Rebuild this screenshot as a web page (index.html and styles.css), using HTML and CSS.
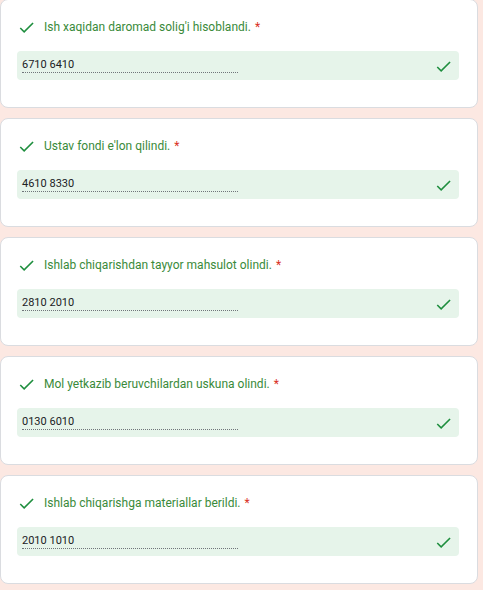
FILE: index.html
```html
<!DOCTYPE html>
<html lang="uz">
<head>
<meta charset="utf-8">
<title>Form</title>
<link rel="stylesheet" href="styles.css">
</head>
<body>
<div class="page">
  <div class="card">
    <div class="title-row">
      <svg class="check" viewBox="0 0 24 24"><path d="M9 16.17L4.83 12l-1.42 1.41L9 19 21 7l-1.41-1.41z"/></svg>
      <span class="title">Ish xaqidan daromad solig'i hisoblandi.</span><span class="req">*</span>
    </div>
    <div class="answer">
      <span class="value">6710 6410</span>
      <svg class="check check-right" viewBox="0 0 24 24"><path d="M9 16.17L4.83 12l-1.42 1.41L9 19 21 7l-1.41-1.41z"/></svg>
    </div>
  </div>
  <div class="card">
    <div class="title-row">
      <svg class="check" viewBox="0 0 24 24"><path d="M9 16.17L4.83 12l-1.42 1.41L9 19 21 7l-1.41-1.41z"/></svg>
      <span class="title">Ustav fondi e'lon qilindi.</span><span class="req">*</span>
    </div>
    <div class="answer">
      <span class="value">4610 8330</span>
      <svg class="check check-right" viewBox="0 0 24 24"><path d="M9 16.17L4.83 12l-1.42 1.41L9 19 21 7l-1.41-1.41z"/></svg>
    </div>
  </div>
  <div class="card">
    <div class="title-row">
      <svg class="check" viewBox="0 0 24 24"><path d="M9 16.17L4.83 12l-1.42 1.41L9 19 21 7l-1.41-1.41z"/></svg>
      <span class="title">Ishlab chiqarishdan tayyor mahsulot olindi.</span><span class="req">*</span>
    </div>
    <div class="answer">
      <span class="value">2810 2010</span>
      <svg class="check check-right" viewBox="0 0 24 24"><path d="M9 16.17L4.83 12l-1.42 1.41L9 19 21 7l-1.41-1.41z"/></svg>
    </div>
  </div>
  <div class="card">
    <div class="title-row">
      <svg class="check" viewBox="0 0 24 24"><path d="M9 16.17L4.83 12l-1.42 1.41L9 19 21 7l-1.41-1.41z"/></svg>
      <span class="title">Mol yetkazib beruvchilardan uskuna olindi.</span><span class="req">*</span>
    </div>
    <div class="answer">
      <span class="value">0130 6010</span>
      <svg class="check check-right" viewBox="0 0 24 24"><path d="M9 16.17L4.83 12l-1.42 1.41L9 19 21 7l-1.41-1.41z"/></svg>
    </div>
  </div>
  <div class="card">
    <div class="title-row">
      <svg class="check" viewBox="0 0 24 24"><path d="M9 16.17L4.83 12l-1.42 1.41L9 19 21 7l-1.41-1.41z"/></svg>
      <span class="title">Ishlab chiqarishga materiallar berildi.</span><span class="req">*</span>
    </div>
    <div class="answer">
      <span class="value">2010 1010</span>
      <svg class="check check-right" viewBox="0 0 24 24"><path d="M9 16.17L4.83 12l-1.42 1.41L9 19 21 7l-1.41-1.41z"/></svg>
    </div>
  </div>
</div>
</body>
</html>
```

FILE: styles.css
```css
html, body {
  margin: 0;
  padding: 0;
  background: #fce8e2;
  font-family: Roboto, "Liberation Sans", Arial, sans-serif;
}

.page {
  display: flex;
  flex-direction: column;
  gap: 10px;
  width: 478px;
  margin-top: -1px;
}

.card {
  box-sizing: border-box;
  height: 109px;
  background: #fff;
  border: 1px solid #dadce0;
  border-radius: 8px;
  padding: 17px 18px 0 16px;
}

.title-row {
  display: flex;
  align-items: center;
  height: 20px;
}

.check {
  width: 19px;
  height: 19px;
  fill: #1e8e3e;
  flex: none;
}

.title-row .check {
  margin-right: 8px;
}

.title {
  font-size: 12px;
  color: #3a8a3a;
}

.req {
  font-size: 12px;
  color: #d93025;
  margin-left: 4px;
}

.answer {
  box-sizing: border-box;
  margin-top: 14px;
  height: 29px;
  background: #e6f4ea;
  border-radius: 4px;
  display: flex;
  align-items: center;
  justify-content: space-between;
  padding: 0 6px 0 5px;
}

.value {
  box-sizing: border-box;
  width: 216px;
  font-size: 11px;
  color: #202124;
  line-height: 14px;
  border-bottom: 1px dotted #70757a;
}

.check-right {
  margin-top: 2px;
}
```
